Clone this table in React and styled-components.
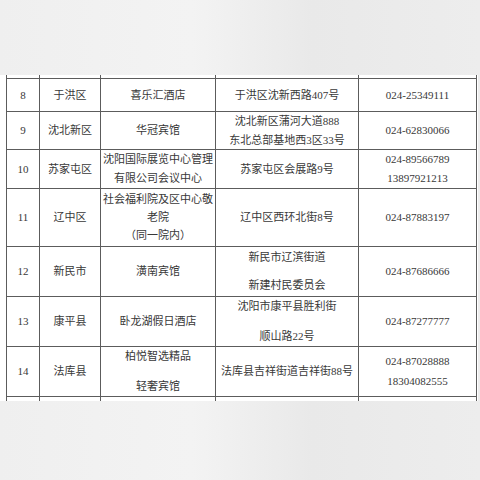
import React from "react";
import styled, { createGlobalStyle } from "styled-components";

const rows = [
  { no: "8", area: "于洪区", name: ["喜乐汇酒店"], addr: ["于洪区沈新西路407号"], tel: ["024-25349111"], h: 33 },
  { no: "9", area: "沈北新区", name: ["华冠宾馆"], addr: ["沈北新区蒲河大道888", "东北总部基地西3区33号"], tel: ["024-62830066"], h: 38 },
  { no: "10", area: "苏家屯区", name: ["沈阳国际展览中心管理", "有限公司会议中心"], addr: ["苏家屯区会展路9号"], tel: ["024-89566789", "13897921213"], h: 39 },
  { no: "11", area: "辽中区", name: ["社会福利院及区中心敬", "老院", "（同一院内）"], nameGap: 4, addr: ["辽中区西环北街8号"], tel: ["024-87883197"], h: 58 },
  { no: "12", area: "新民市", name: ["潢南宾馆"], addr: ["新民市辽滨街道", "新建村民委员会"], addrGap: 14, tel: ["024-87686666"], h: 50 },
  { no: "13", area: "康平县", name: ["卧龙湖假日酒店"], addr: ["沈阳市康平县胜利街", "顺山路22号"], addrGap: 16, tel: ["024-87277777"], h: 50 },
  { no: "14", area: "法库县", name: ["柏悦智选精品", "轻奢宾馆"], nameGap: 16, addr: ["法库县吉祥街道吉祥街88号"], tel: ["024-87028888", "18304082555"], telGap: 6, h: 50 },
];

const Lines = ({ items, gap = 5 }) => (
  <Stack $gap={gap}>
    {items.map((t, i) => (
      <Line key={i}>{t}</Line>
    ))}
  </Stack>
);

const App = () => {
  return (
    <>
      <GlobalStyle />
      <Screen>
        <Sheet>
          <Table>
            <colgroup>
              <col style={{ width: 33 }} />
              <col style={{ width: 61 }} />
              <col style={{ width: 115 }} />
              <col style={{ width: 143 }} />
              <col style={{ width: 118 }} />
            </colgroup>
            <tbody>
              <Spacer $h={3}>
                <td /><td /><td /><td /><td />
              </Spacer>
              {rows.map((r) => (
                <Row key={r.no} $h={r.h}>
                  <Cell>{r.no}</Cell>
                  <Cell>{r.area}</Cell>
                  <Cell><Lines items={r.name} gap={r.nameGap} /></Cell>
                  <Cell><Lines items={r.addr} gap={r.addrGap} /></Cell>
                  <Cell><Lines items={r.tel} gap={r.telGap} /></Cell>
                </Row>
              ))}
              <Spacer $h={5}>
                <td /><td /><td /><td /><td />
              </Spacer>
            </tbody>
          </Table>
        </Sheet>
      </Screen>
    </>
  );
};

export default App;

/* -------------------- STYLES -------------------- */

const GlobalStyle = createGlobalStyle`
  html, body {
    margin: 0;
    padding: 0;
  }
  body {
    background: #ececec;
    font-family: "Liberation Serif", "Noto Sans CJK SC", serif;
  }
`;

const Screen = styled.div`
  width: 480px;
  height: 480px;
  background: linear-gradient(90deg, #efefef 0%, #f3f3f3 40%, #e9e9e9 65%, #ededed 100%);
  padding-top: 75px;
  box-sizing: border-box;
`;

const Sheet = styled.div`
  width: 478px;
  background: #fff;
  padding-left: 6px;
  box-sizing: border-box;
`;

const Table = styled.table`
  border-collapse: collapse;
  table-layout: fixed;
  width: 471px;
  color: #383838;
  font-size: 11px;
`;

const Row = styled.tr`
  height: ${(p) => p.$h}px;
`;

const Spacer = styled.tr`
  height: ${(p) => p.$h}px;

  td {
    border-left: 1px solid #5c5c5c;
    border-right: 1px solid #5c5c5c;
    padding: 0;
  }
`;

const Cell = styled.td`
  border: 1px solid #5c5c5c;
  text-align: center;
  vertical-align: middle;
  padding: 0 1px;
  white-space: nowrap;
  line-height: 14px;
`;

const Stack = styled.div`
  display: flex;
  flex-direction: column;
  align-items: center;
  gap: ${(p) => p.$gap}px;
`;

const Line = styled.div`
  height: 14px;
`;
